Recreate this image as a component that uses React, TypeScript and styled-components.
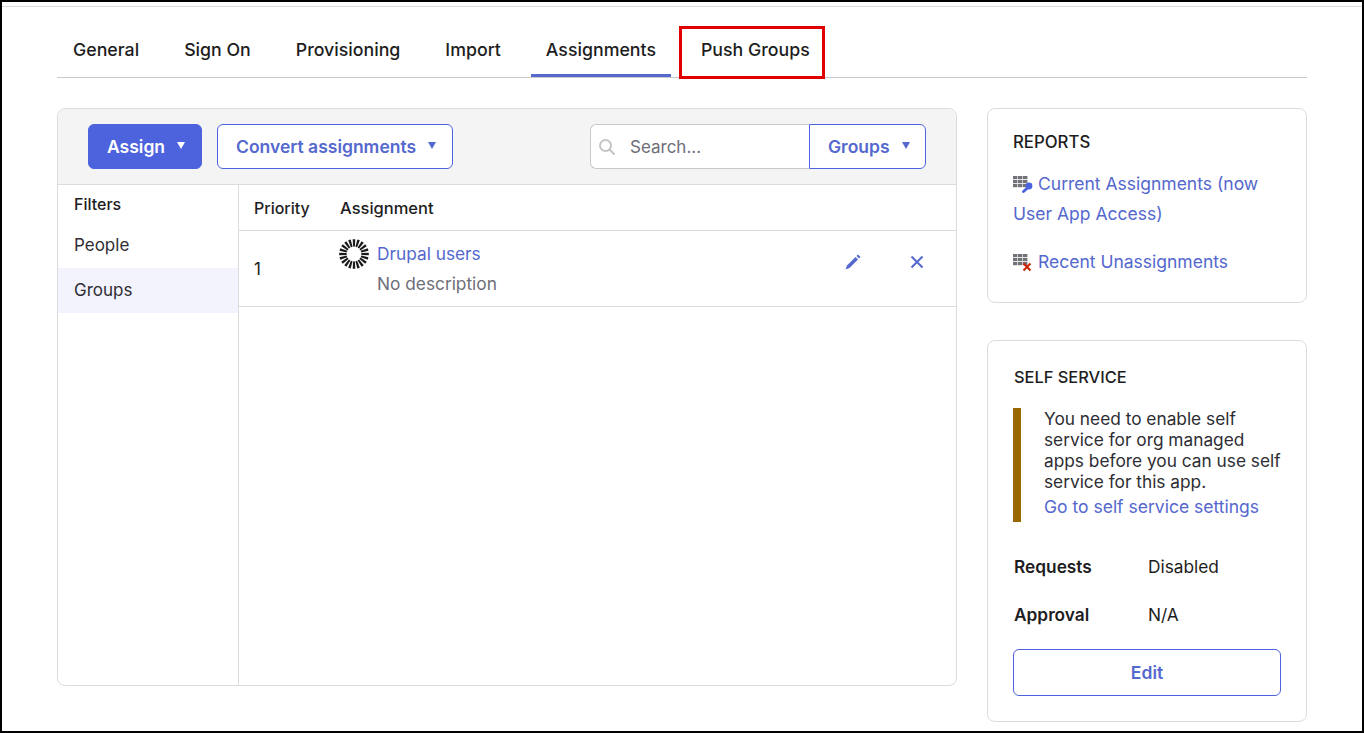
import * as React from 'react'
import styled, { createGlobalStyle } from 'styled-components'

const BLUE = '#4d63dd'
const LINK = '#5468ce'
const INK = '#1d1d21'

const GlobalStyle = createGlobalStyle`
  html, body {
    margin: 0;
    padding: 0;
    background: #fff;
    font-family: Inter, "Liberation Sans", sans-serif;
    color: ${INK};
  }
`

const Frame = styled.div`
  box-sizing: border-box;
  width: 1364px;
  height: 733px;
  border: solid #000;
  border-width: 2px;
  overflow: hidden;
  background: #fff;
  padding-top: 4px;
`

const Content = styled.div`
  border-top: 1px solid #dcdcdc;
  padding: 0 55px;
`

const TabBar = styled.nav`
  display: flex;
  gap: 15px;
  height: 71px;
  box-sizing: border-box;
  padding: 20px 0 0 1px;
  border-bottom: 1px solid #c9c9cc;
`

const Tab = styled.a<{ $active?: boolean; $marked?: boolean }>`
  position: relative;
  box-sizing: border-box;
  height: 50px;
  padding: 12px 15px 0 15px;
  font-size: 17.75px;
  font-weight: 500;
  line-height: 22px;
  white-space: nowrap;
  border-bottom: 3px solid ${({ $active }) => ($active ? LINK : 'transparent')};
  ${({ $marked }) =>
    $marked &&
    `&::after {
      content: '';
      position: absolute;
      left: -7px;
      right: 0;
      top: -1px;
      bottom: -5px;
      border: 3px solid #e00000;
    }`}
`

const Columns = styled.div`
  display: flex;
  align-items: flex-start;
  justify-content: space-between;
  margin-top: 30px;
`

const MainPanel = styled.section`
  box-sizing: border-box;
  width: 900px;
  height: 578px;
  border: 1px solid #dcdcdf;
  border-radius: 8px;
  overflow: hidden;
  display: flex;
  flex-direction: column;
`

const Toolbar = styled.div`
  box-sizing: border-box;
  height: 76px;
  flex: none;
  background: #f4f4f4;
  border-bottom: 1px solid #dcdcdf;
  display: flex;
  align-items: flex-start;
  padding: 15px 30px;
  gap: 15px;
`

const Button = styled.button<{ $primary?: boolean; $width: number }>`
  box-sizing: border-box;
  width: ${({ $width }) => $width}px;
  height: 45px;
  padding: 0 0 0 18px;
  display: flex;
  align-items: center;
  gap: 12px;
  font: 600 17.5px Inter, "Liberation Sans", sans-serif;
  border-radius: 6px;
  border: 1px solid ${BLUE};
  color: ${({ $primary }) => ($primary ? '#fff' : LINK)};
  background: ${({ $primary }) => ($primary ? BLUE : '#fff')};
`

const Caret = styled.span`
  display: block;
  width: 0;
  height: 0;
  margin-top: -3px;
  border-left: 4px solid transparent;
  border-right: 4px solid transparent;
  border-top: 7px solid currentColor;
`

const SearchGroup = styled.div`
  margin-left: auto;
  display: flex;
`

const SearchBox = styled.label`
  box-sizing: border-box;
  width: 219px;
  height: 45px;
  display: flex;
  align-items: center;
  padding-left: 7px;
  gap: 14px;
  background: #fff;
  border: 1px solid #c9c9cc;
  border-right: none;
  border-radius: 6px 0 0 6px;
`

const SearchInput = styled.input`
  border: none;
  outline: none;
  background: transparent;
  width: 170px;
  padding: 0;
  font: 400 17px Inter, "Liberation Sans", sans-serif;
  &::placeholder {
    color: #6e6e78;
    opacity: 1;
  }
`

const GroupsButton = styled(Button)`
  border-radius: 0 6px 6px 0;
`

const Body = styled.div`
  flex: 1;
  display: flex;
`

const Sidebar = styled.aside`
  box-sizing: border-box;
  width: 181px;
  flex: none;
  border-right: 1px solid #dcdcdf;
  padding-top: 8px;
`

const FilterTitle = styled.div`
  padding-left: 16px;
  height: 22px;
  margin-bottom: 8px;
  font-size: 16px;
  font-weight: 500;
  line-height: 22px;
`

const FilterItem = styled.div<{ $selected?: boolean }>`
  box-sizing: border-box;
  height: 45px;
  padding: 0 0 2px 16px;
  display: flex;
  align-items: center;
  font-size: 17px;
  color: #2d2d33;
  background: ${({ $selected }) => ($selected ? '#f3f3fd' : 'transparent')};
`

const TablePane = styled.div`
  flex: 1;
`

const HeadRow = styled.div`
  box-sizing: border-box;
  height: 46px;
  border-bottom: 1px solid #dcdcdf;
  display: flex;
  align-items: center;
  font-size: 16px;
  font-weight: 500;
  padding-left: 15px;
`

const PriorityHead = styled.div`
  width: 86px;
`

const AssignmentHead = styled.div`
  font-size: 16.5px;
`

const DataRow = styled.div`
  box-sizing: border-box;
  height: 76px;
  border-bottom: 1px solid #dcdcdf;
  display: flex;
  padding-left: 15px;
`

const PriorityCell = styled.div`
  width: 85px;
  font-size: 17px;
  line-height: 76px;
`

const GroupIcon = styled.svg`
  width: 30px;
  height: 30px;
  margin-top: 8px;
  margin-right: 8px;
  flex: none;
`

const GroupText = styled.div`
  padding-top: 8px;
  font-size: 17.3px;
  line-height: 30px;
  flex: 1;
`

const Link = styled.a`
  color: ${LINK};
`

const Muted = styled.div`
  color: #6e6e78;
`

const RowActions = styled.div`
  display: flex;
  gap: 46px;
  padding: 22px 30px 0 0;
`

const ActionIcon = styled.svg`
  display: block;
  width: 18px;
  height: 18px;
`

const SideColumn = styled.div`
  width: 320px;
  display: flex;
  flex-direction: column;
  gap: 37px;
`

const Card = styled.section<{ $height: number; $top: number }>`
  box-sizing: border-box;
  height: ${({ $height }) => $height}px;
  border: 1px solid #dcdcdf;
  border-radius: 8px;
  padding: ${({ $top }) => $top}px 25px 0 25px;
`

const CardTitle = styled.h3<{ $size: number; $indent?: number }>`
  margin: 0;
  padding-left: ${({ $indent }) => $indent ?? 0}px;
  font-size: ${({ $size }) => $size}px;
  font-weight: 500;
  line-height: 22px;
`

const ReportLink = styled.div<{ $gap: number }>`
  margin-top: ${({ $gap }) => $gap}px;
  color: ${LINK};
  font-size: 17.5px;
  line-height: 30px;
`

const ReportIcon = styled.svg`
  width: 20px;
  height: 18px;
  margin-right: 5px;
  vertical-align: -4px;
`

const Notice = styled.div`
  margin-top: 20px;
  height: 114px;
  box-sizing: border-box;
  border-left: 8px solid #996600;
  padding-left: 23px;
  font-size: 17.3px;
  line-height: 21px;
  color: #2d2d33;
`

const NoticeLink = styled.a`
  display: block;
  color: ${LINK};
  font-size: 17.5px;
  line-height: 29px;
`

const InfoRow = styled.div<{ $top: number }>`
  display: flex;
  margin-top: ${({ $top }) => $top}px;
  padding-left: 1px;
  font-size: 17.3px;
  line-height: 24px;
`

const InfoLabel = styled.div`
  width: 134px;
  font-weight: 600;
`

const EditButton = styled.button`
  display: block;
  box-sizing: border-box;
  width: 268px;
  height: 47px;
  margin-top: 22px;
  background: #fff;
  border: 1px solid ${BLUE};
  border-radius: 6px;
  color: ${LINK};
  font: 600 17.5px Inter, "Liberation Sans", sans-serif;
`

const sunRays = Array.from({ length: 20 }, (_, i) => (i * 360) / 20)

const GridCells = () => (
  <g fill="#727279">
    {[0, 4, 8].map((y) =>
      [0, 5, 10].map((x) => (
        <rect key={`${x}-${y}`} x={x} y={y} width="4.4" height="3.2" />
      ))
    )}
  </g>
)

export default function App() {
  return (
    <>
      <GlobalStyle />
      <Frame>
        <Content>
          <TabBar>
            <Tab>General</Tab>
            <Tab>Sign On</Tab>
            <Tab>Provisioning</Tab>
            <Tab>Import</Tab>
            <Tab $active>Assignments</Tab>
            <Tab $marked>Push Groups</Tab>
          </TabBar>
          <Columns>
            <MainPanel>
              <Toolbar>
                <Button $primary $width={114}>
                  Assign <Caret />
                </Button>
                <Button $width={236}>
                  Convert assignments <Caret />
                </Button>
                <SearchGroup>
                  <SearchBox>
                    <svg width="18" height="18" viewBox="0 0 18 18" fill="none" stroke="#c4c4c8" strokeWidth="2">
                      <circle cx="7.5" cy="7.5" r="5.5" />
                      <path d="M11.5 11.5 16 16" strokeLinecap="round" />
                    </svg>
                    <SearchInput placeholder="Search..." />
                  </SearchBox>
                  <GroupsButton $width={117}>
                    Groups <Caret />
                  </GroupsButton>
                </SearchGroup>
              </Toolbar>
              <Body>
                <Sidebar>
                  <FilterTitle>Filters</FilterTitle>
                  <FilterItem>People</FilterItem>
                  <FilterItem $selected>Groups</FilterItem>
                </Sidebar>
                <TablePane>
                  <HeadRow>
                    <PriorityHead>Priority</PriorityHead>
                    <AssignmentHead>Assignment</AssignmentHead>
                  </HeadRow>
                  <DataRow>
                    <PriorityCell>1</PriorityCell>
                    <GroupIcon viewBox="0 0 30 30">
                      {sunRays.map((deg) => (
                        <path
                          key={deg}
                          d="M13.7 .2H16.3L15.9 7.6H14.1Z"
                          fill="#1a1a1a"
                          transform={`rotate(${deg} 15 15)`}
                        />
                      ))}
                    </GroupIcon>
                    <GroupText>
                      <Link>Drupal users</Link>
                      <Muted>No description</Muted>
                    </GroupText>
                    <RowActions>
                      <ActionIcon viewBox="0 0 18 18">
                        <path d="M1.5 16.5 3 12.5 11.5 4 14 6.5 5.5 15Z" fill={LINK} />
                        <path d="M12.5 3 14 1.5 16.5 4 15 5.5Z" fill={LINK} />
                      </ActionIcon>
                      <ActionIcon viewBox="0 0 18 18">
                        <path d="M3.5 3.5 14.5 14.5M14.5 3.5 3.5 14.5" stroke={LINK} strokeWidth="2" />
                      </ActionIcon>
                    </RowActions>
                  </DataRow>
                </TablePane>
              </Body>
            </MainPanel>
            <SideColumn>
              <Card $height={195} $top={22}>
                <CardTitle $size={16.8}>REPORTS</CardTitle>
                <ReportLink $gap={16}>
                  <ReportIcon viewBox="0 0 20 18">
                    <GridCells />
                    <path d="M10.5 15.5 15 11.5" stroke={BLUE} strokeWidth="3" strokeLinecap="round" />
                    <circle cx="16" cy="10" r="3.4" fill={BLUE} />
                  </ReportIcon>
                  Current Assignments (now User App Access)
                </ReportLink>
                <ReportLink $gap={18}>
                  <ReportIcon viewBox="0 0 20 18">
                    <GridCells />
                    <path d="M10.5 9.5 17.5 16.5M17.5 9.5 10.5 16.5" stroke="#cc2200" strokeWidth="2" />
                  </ReportIcon>
                  Recent Unassignments
                </ReportLink>
              </Card>
              <Card $height={382} $top={25}>
                <CardTitle $size={16.4} $indent={1}>SELF SERVICE</CardTitle>
                <Notice>
                  You need to enable self service for org managed apps before you can use self service for this app.
                  <NoticeLink>Go to self service settings</NoticeLink>
                </Notice>
                <InfoRow $top={33}>
                  <InfoLabel>Requests</InfoLabel>
                  <div>Disabled</div>
                </InfoRow>
                <InfoRow $top={24}>
                  <InfoLabel>Approval</InfoLabel>
                  <div>N/A</div>
                </InfoRow>
                <EditButton>Edit</EditButton>
              </Card>
            </SideColumn>
          </Columns>
        </Content>
      </Frame>
    </>
  )
}
